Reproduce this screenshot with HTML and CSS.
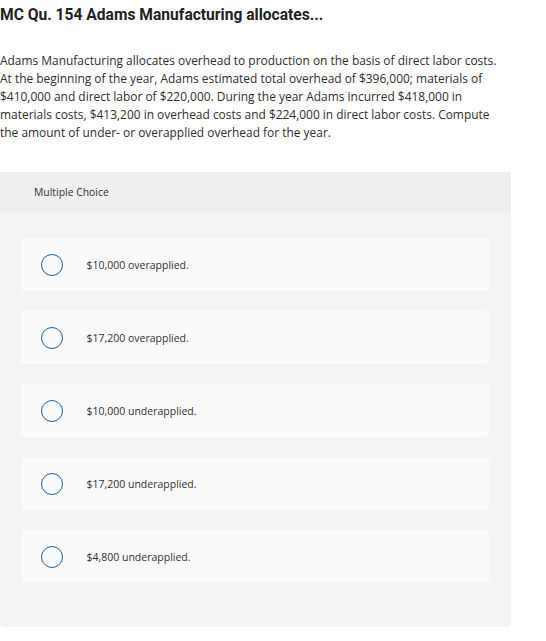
FILE: index.html
```html
<!DOCTYPE html>
<html>
<head>
<meta charset="utf-8">
<link rel="stylesheet" href="styles.css">
</head>
<body>
<h1 class="title">MC Qu. 154 Adams Manufacturing allocates...</h1>
<p class="question">Adams Manufacturing allocates overhead to production on the basis of direct labor costs. At the beginning of the year, Adams estimated total overhead of $396,000; materials of $410,000 and direct labor of $220,000. During the year Adams incurred $418,000 in materials costs, $413,200 in overhead costs and $224,000 in direct labor costs. Compute the amount of under- or overapplied overhead for the year.</p>
<div class="panel">
  <div class="panel-head">Multiple Choice</div>
  <div class="panel-body">
    <div class="option"><span class="radio"></span><span class="label">$10,000 overapplied.</span></div>
    <div class="option"><span class="radio"></span><span class="label">$17,200 overapplied.</span></div>
    <div class="option"><span class="radio"></span><span class="label">$10,000 underapplied.</span></div>
    <div class="option"><span class="radio"></span><span class="label">$17,200 underapplied.</span></div>
    <div class="option"><span class="radio"></span><span class="label">$4,800 underapplied.</span></div>
  </div>
</div>
</body>
</html>
```
FILE: styles.css
```css
html, body {
  margin: 0;
  padding: 0;
  background: #fff;
}
body {
  font-family: "Open Sans", Arial, sans-serif;
  color: #2e2e2e;
  width: 546px;
}
.title {
  margin: 0;
  padding-top: 5px;
  font-family: Roboto, "Open Sans", Arial, sans-serif;
  font-size: 15.6px;
  line-height: 20px;
  font-weight: 700;
  color: #222;
}
.question {
  margin: 27px 0 0 0;
  font-size: 11.95px;
  line-height: 18px;
  color: #2e2e2e;
  width: 506px;
}
.panel {
  margin-top: 30px;
  width: 511px;
  border-radius: 0 0 4px 4px;
  overflow: hidden;
}
.panel-head {
  background: #efefef;
  height: 40px;
  display: flex;
  align-items: center;
  padding-left: 34px;
  font-size: 10.4px;
  color: #333;
}
.panel-body {
  background: #f4f4f4;
  padding: 26px 22px 44px 21px;
  display: flex;
  flex-direction: column;
  gap: 20px;
}
.option {
  background: #fafafa;
  border-radius: 3px;
  height: 53px;
  display: flex;
  align-items: center;
  padding-left: 20px;
}
.radio {
  width: 20px;
  height: 20px;
  border: 1.5px solid #1d5f98;
  border-radius: 50%;
  flex: none;
}
.label {
  margin-left: 23.5px;
  font-size: 10.5px;
  color: #333;
}
```
